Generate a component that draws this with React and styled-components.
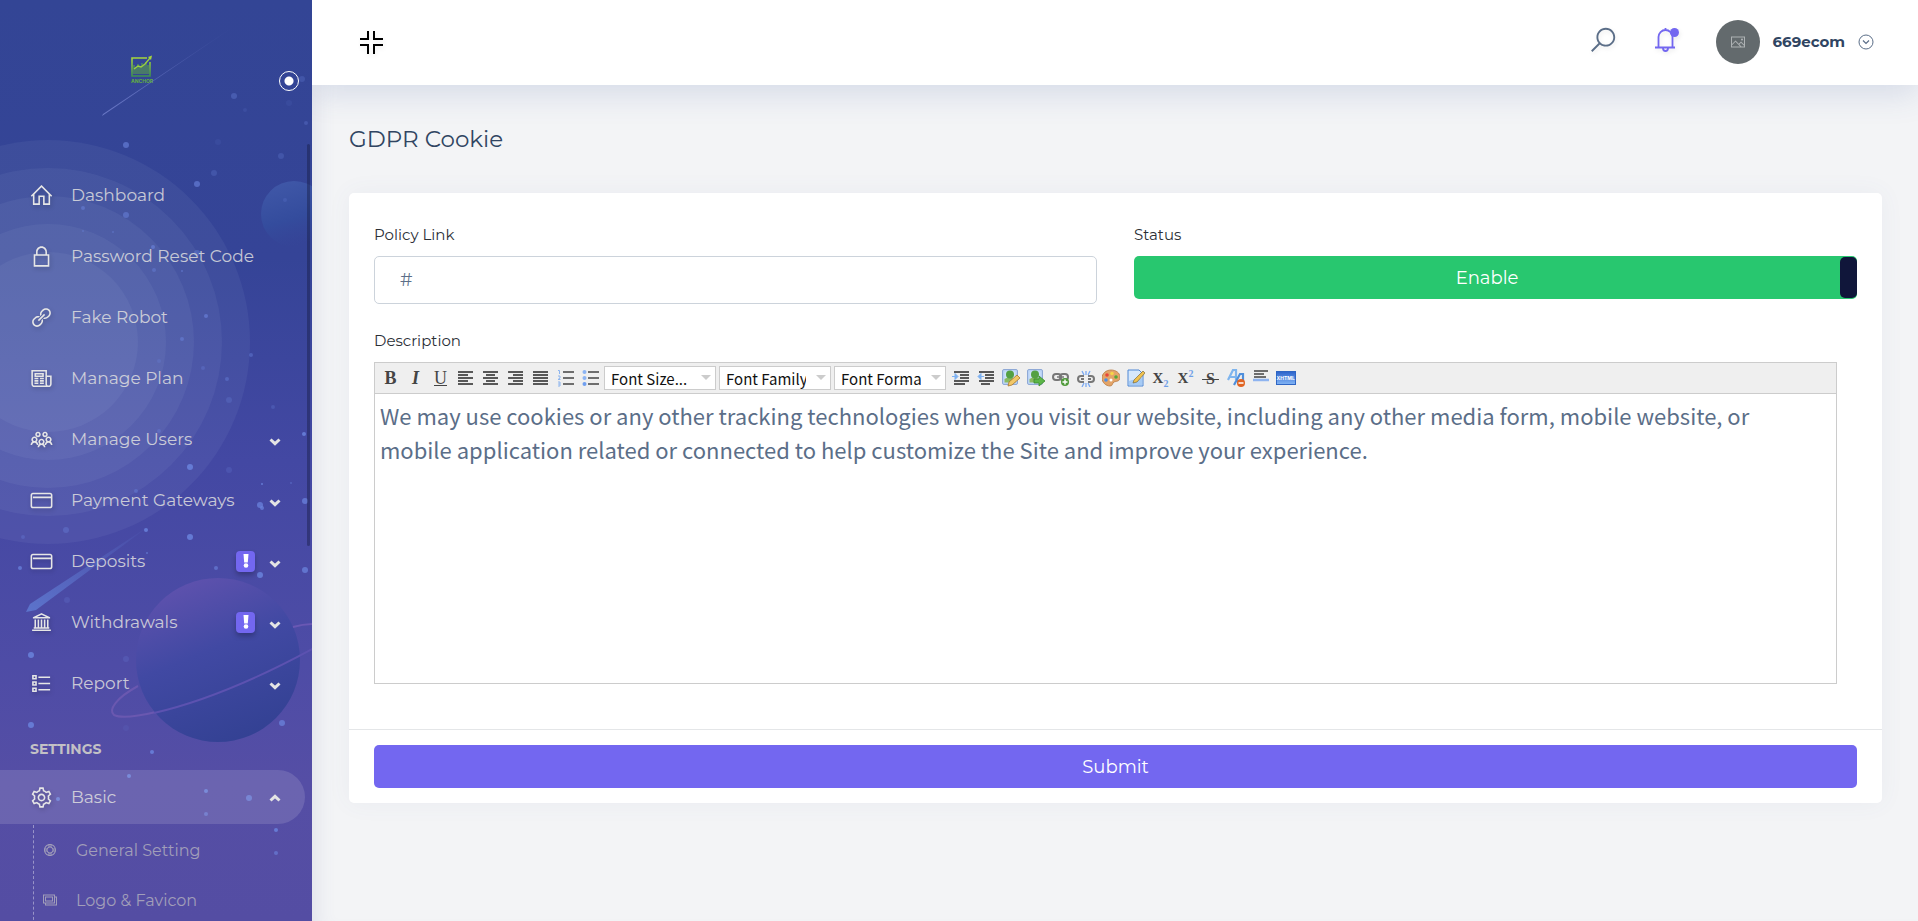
import { useState } from "react";
import styled, { createGlobalStyle } from "styled-components";
import {
  LiaCogSolid,
  LiaCreditCard,
  LiaHomeSolid,
  LiaImage,
  LiaImagesSolid,
  LiaLifeRingSolid,
  LiaLinkSolid,
  LiaListSolid,
  LiaLockSolid,
  LiaNewspaperSolid,
  LiaSearchSolid,
  LiaUniversitySolid,
  LiaUsersSolid,
} from "react-icons/lia";

const MENU = [
  { label: "Dashboard", icon: LiaHomeSolid },
  { label: "Password Reset Code", icon: LiaLockSolid },
  { label: "Fake Robot", icon: LiaLinkSolid },
  { label: "Manage Plan", icon: LiaNewspaperSolid },
  { label: "Manage Users", icon: LiaUsersSolid, nested: true },
  { label: "Payment Gateways", icon: LiaCreditCard, nested: true },
  { label: "Deposits", icon: LiaCreditCard, nested: true, alert: true },
  { label: "Withdrawals", icon: LiaUniversitySolid, nested: true, alert: true },
  { label: "Report", icon: LiaListSolid, nested: true },
];

const SUB_MENU = [
  { label: "General Setting", icon: LiaLifeRingSolid },
  { label: "Logo & Favicon", icon: LiaImagesSolid },
];

const DESCRIPTION =
  "We may use cookies or any other tracking technologies when you visit our website, including any other media form, mobile website, or mobile application related or connected to help customize the Site and improve your experience.";

// [x, y, radius, opacity]
const STARS = [
  [126, 145, 3, 0.6], [197, 184, 3, 0.6], [126, 215, 3, 0.5], [83, 208, 2, 0.5],
  [153, 247, 2, 0.6], [154, 270, 2, 0.4], [197, 253, 3, 0.4], [83, 231, 1, 0.4],
  [234, 96, 3, 0.35], [302, 79, 3, 0.25], [306, 123, 2, 0.3], [281, 156, 3, 0.25],
  [214, 173, 3, 0.25], [218, 142, 3, 0.1], [245, 110, 2, 0.15], [289, 103, 3, 0.1],
  [285, 200, 2, 0.2], [113, 232, 1, 0.4], [182, 271, 1, 0.5], [206, 316, 2, 0.6],
  [182, 339, 2, 0.5], [251, 355, 2, 0.4], [203, 368, 2, 0.3], [227, 379, 2, 0.4],
  [229, 400, 3, 0.25], [159, 361, 2, 0.25], [159, 431, 2, 0.35], [273, 407, 2, 0.25],
  [304, 434, 2, 0.8], [190, 467, 3, 0.8], [229, 470, 3, 0.2], [262, 484, 1, 0.8],
  [291, 483, 1, 0.4], [305, 501, 3, 0.7], [260, 505, 3, 0.7], [262, 508, 2, 0.7],
  [136, 491, 2, 0.4], [66, 530, 3, 0.35], [23, 537, 2, 0.3], [146, 530, 2, 0.8],
  [190, 537, 3, 0.8], [147, 553, 1, 0.6], [20, 568, 2, 0.7], [216, 568, 2, 0.6],
  [260, 575, 3, 0.8], [305, 570, 3, 0.7], [67, 600, 3, 0.2], [31, 655, 3, 0.8],
  [126, 659, 3, 0.2], [31, 725, 3, 0.8], [126, 728, 3, 0.1], [282, 723, 3, 0.7],
  [152, 752, 2, 0.8], [129, 776, 2, 0.8], [206, 791, 2, 0.8], [249, 798, 3, 0.7],
  [58, 799, 2, 0.8], [206, 814, 2, 0.6], [276, 830, 2, 0.8], [276, 853, 2, 0.6],
];

const SpaceBackdrop = () => (
  <Backdrop viewBox="0 0 312 921" preserveAspectRatio="xMidYMin slice" aria-hidden="true">
    <defs>
      <linearGradient id="sky" x1="0" y1="0" x2="0" y2="1">
        <stop offset="0" stopColor="#334595" />
        <stop offset="0.28" stopColor="#354497" />
        <stop offset="0.5" stopColor="#4348a3" />
        <stop offset="0.72" stopColor="#4e4ca6" />
        <stop offset="0.85" stopColor="#554ea5" />
        <stop offset="1" stopColor="#544da3" />
      </linearGradient>
      <linearGradient id="planet" x1="0.25" y1="0" x2="0.65" y2="1">
        <stop offset="0" stopColor="#6052ae" />
        <stop offset="0.45" stopColor="#4149a3" />
        <stop offset="1" stopColor="#334193" />
      </linearGradient>
      <linearGradient id="moon" x1="0.2" y1="0" x2="0.5" y2="1">
        <stop offset="0" stopColor="#4058a8" />
        <stop offset="0.6" stopColor="#344c9d" />
        <stop offset="1" stopColor="#36479a" stopOpacity="0" />
      </linearGradient>
      <linearGradient id="streak" x1="0" y1="1" x2="1" y2="0">
        <stop offset="0" stopColor="#6a78c6" />
        <stop offset="1" stopColor="#6a78c6" stopOpacity="0" />
      </linearGradient>
      <linearGradient id="comet" x1="0" y1="1" x2="1" y2="0">
        <stop offset="0" stopColor="#5c74cc" />
        <stop offset="1" stopColor="#5c74cc" stopOpacity="0" />
      </linearGradient>
    </defs>
    <rect width="312" height="921" fill="url(#sky)" />
    {[202, 174, 146, 118, 90].map((r) => (
      <circle key={r} cx="48" cy="342" r={r} fill="#d8e6ff" fillOpacity="0.055" />
    ))}
    <circle cx="294" cy="214" r="33" fill="url(#moon)" />
    <path d="M102 116 L103 114 L242 21 Z" fill="url(#streak)" />
    <path d="M26 612 L30 604 L152 524 L36 610 Z" fill="url(#comet)" />
    <path d="M138 686 C116 698 108 710 114 715 C120 718 135 717 156 712" fill="none" stroke="#6a58b0" strokeWidth="2" />
    <circle cx="218" cy="660" r="82" fill="url(#planet)" />
    <path d="M154 713 C210 700 270 672 314 648" fill="none" stroke="#5c52b0" strokeWidth="2" />
    <path d="M293 627 C300 625 308 624 314 624" fill="none" stroke="#6a58b4" strokeWidth="2" />
    {STARS.map(([x, y, r, o]) => (
      <circle key={`${x}-${y}`} cx={x} cy={y} r={r} fill="#6c86e0" fillOpacity={o} />
    ))}
  </Backdrop>
);

const Chevron = ({ up }) => (
  <svg width="12" height="8" viewBox="0 0 12 8" aria-hidden="true">
    <path d={up ? "M1.5 6.5 L6 2.4 L10.5 6.5" : "M1.5 1.5 L6 5.6 L10.5 1.5"} fill="none" stroke="#e4e4e4" strokeWidth="3" />
  </svg>
);

const BrandLogo = () => (
  <svg width="24" height="30" viewBox="0 0 24 30">
    <defs>
      <linearGradient id="leaf" x1="0" y1="0" x2="0" y2="1">
        <stop offset="0" stopColor="#a6d63c" />
        <stop offset="1" stopColor="#3f9150" />
      </linearGradient>
    </defs>
    <path d="M17 3 H2 V21 H20 V7" fill="none" stroke="url(#leaf)" strokeWidth="1.6" />
    <path
      d="M4 10v9M6 12v7M8 9v10M10 12v7M12 8v11M14 10v9M16 7v12M18 10v9"
      stroke="#5fae3e"
      strokeWidth="1"
    />
    <path d="M4 14 L8 11 L11 12 L15 9 L20 3" fill="none" stroke="#9bd03f" strokeWidth="1.4" />
    <path d="M18 2 L22 0.5 L21 5 Z" fill="#a6d63c" />
    <LogoWord x="12" y="28" textAnchor="middle">ANCHOR</LogoWord>
  </svg>
);

const CompressIcon = () => (
  <svg width="24" height="24" viewBox="0 0 24 24" aria-hidden="true">
    <path d="M9 1V9H1M15 1V9H24M1 15H9V24M24 15H15V24" fill="none" stroke="#000" strokeWidth="2" />
  </svg>
);

const BellIcon = () => (
  <svg width="26" height="26" viewBox="0 0 26 26" aria-hidden="true">
    <path
      d="M4.5 20.5V10a7 7 0 0 1 14 0v10.5M1 20.5H21M11.5 1v2"
      fill="none"
      stroke="#7367f0"
      strokeWidth="1.8"
    />
    <path d="M9 21a2.5 3 0 0 0 5 0" fill="none" stroke="#7367f0" strokeWidth="1.8" />
    <circle cx="20.5" cy="5.5" r="4.5" fill="#7367f0" />
  </svg>
);

const CircleDownIcon = () => (
  <svg width="16" height="16" viewBox="0 0 16 16" aria-hidden="true">
    <circle cx="8" cy="8" r="7" fill="none" stroke="#5b6e88" />
    <path d="M5 6.5 L8 9.5 L11 6.5" fill="none" stroke="#5b6e88" strokeWidth="1.2" />
  </svg>
);

// Toolbar pictograms, all on an 18 x 18 grid
const bars = (rows, stroke = "#333") =>
  rows.map(([x1, x2], i) => (
    <path key={i} d={`M${x1} ${3 + i * 3}H${x2}`} stroke={stroke} strokeWidth="1.6" />
  ));

const picture = (
  <>
    <rect x="0.5" y="0.5" width="15" height="15" rx="1.5" fill="#b9d2f5" stroke="#8fa9d6" />
    <rect x="2.5" y="2.5" width="11" height="11" fill="#cfe2fb" />
    <path d="M2.5 13.5V10l4-2 7 2v3.5z" fill="#8aba62" />
    <circle cx="8" cy="5.5" r="4" fill="#54a043" />
  </>
);

const ICONS = {
  left: bars([[1, 16], [1, 11], [1, 16], [1, 11], [1, 16]]),
  center: bars([[1, 16], [4, 13], [1, 16], [4, 13], [1, 16]]),
  right: bars([[1, 16], [6, 16], [1, 16], [6, 16], [1, 16]]),
  justify: bars([[1, 16], [1, 16], [1, 16], [1, 16], [1, 16]]),
  ordered: (
    <>
      <path d="M6 3H17M6 9H17M6 15H17" stroke="#444" strokeWidth="1.5" />
      <path d="M1 1.5h1.5V5M1 7h2v2l-2 1.5h2.5M1 13h2v4H1M1 15h2" fill="none" stroke="#8cb4ee" />
    </>
  ),
  bullets: (
    <>
      <path d="M6 3H17M6 9H17M6 15H17" stroke="#444" strokeWidth="1.5" />
      <circle cx="2.5" cy="3" r="2" fill="#8cb4f4" />
      <circle cx="2.5" cy="9" r="2" fill="#8cb4f4" />
      <circle cx="2.5" cy="15" r="2" fill="#6f9ff0" />
    </>
  ),
  indent: (
    <>
      {bars([[2, 17], [8, 17], [8, 17], [2, 17], [2, 13]])}
      <path d="M0 7.5H4M3 4.5l3 3-3 3z" fill="#7db1f2" stroke="#7db1f2" />
    </>
  ),
  outdent: (
    <>
      {bars([[2, 17], [8, 17], [8, 17], [2, 17], [4, 13]])}
      <path d="M7 7.5H3M4 4.5l-3 3 3 3z" fill="#7db1f2" stroke="#7db1f2" />
    </>
  ),
  editImage: (
    <>
      {picture}
      <path d="M6 17l1-4 8-7 3 3-8 7z" fill="#f2c869" stroke="#a9762b" strokeWidth="0.8" />
    </>
  ),
  addImage: (
    <>
      {picture}
      <path d="M7 10h5V7l6 5-6 5v-3H7z" fill="#5cb648" stroke="#3a8a2b" strokeWidth="0.8" />
    </>
  ),
  link: (
    <>
      <rect x="1" y="5" width="8" height="6" rx="3" fill="none" stroke="#777" strokeWidth="2" />
      <rect x="8" y="5" width="8" height="6" rx="3" fill="none" stroke="#777" strokeWidth="2" />
      <path d="M5 8h7" stroke="#777" strokeWidth="1.5" />
      <circle cx="13" cy="13" r="4" fill="#4f9a3a" />
      <path d="M13 10.5v5M10.5 13h5" stroke="#fff" strokeWidth="1.4" />
    </>
  ),
  unlink: (
    <>
      <path d="M7 7H4a3 3 0 0 0 0 6h3M11 7h3a3 3 0 0 1 0 6h-3M4 10h3M11 10h3" fill="none" stroke="#777" strokeWidth="2" />
      <path d="M9 2v4M5 2l2 4M13 2l-2 4M9 18v-4M5 18l2-4M13 18l-2-4" stroke="#7aa9f2" strokeWidth="1.3" />
    </>
  ),
  palette: (
    <>
      <path
        d="M9 1C4 1 0 4.5 0 9s4 8 8 8c3 0 2-3 4-4s6 0 6-5c0-4-4-7-9-7z"
        fill="#e3a468"
        stroke="#b97840"
        strokeWidth="0.8"
      />
      <circle cx="5" cy="6" r="1.8" fill="#e8463a" />
      <circle cx="10" cy="4.5" r="1.8" fill="#f5d547" />
      <circle cx="14" cy="8" r="1.8" fill="#52a838" />
      <circle cx="4" cy="11" r="1.8" fill="#4b8fe8" />
      <circle cx="9" cy="11" r="1.5" fill="#fff" />
    </>
  ),
  page: (
    <>
      <path d="M1 1h11l4 4v12H1z" fill="#d6e8fc" stroke="#4f87d4" />
      <path d="M2 12c4-2 8-1 13-3v7H2z" fill="#a6cbf5" />
      <path d="M6 14l1-3 9-9 2 2-8 9z" fill="#f0c14e" stroke="#6b5a2c" strokeWidth="0.6" />
    </>
  ),
  removeFormat: (
    <>
      <path d="M1 11L6 1h3v10M3 8h6" fill="none" stroke="#7fb5ee" strokeWidth="2.2" />
      <path d="M7 16l6-11h3v8M9 12h6" fill="none" stroke="#4f8fdc" strokeWidth="2.2" />
      <circle cx="14" cy="14" r="4" fill="#e06422" />
      <path d="M11.5 14h5" stroke="#fff" strokeWidth="1.5" />
    </>
  ),
  rule: (
    <>
      <path d="M2 2H16M2 5H12M2 8H14" stroke="#444" strokeWidth="1.5" />
      <path d="M1 11H17" stroke="#8fb4f0" strokeWidth="2.5" />
    </>
  ),
};

const SIZE_TOOLS = ["left", "center", "right", "justify", "ordered", "bullets"];
const INSERT_TOOLS = ["indent", "outdent", "editImage", "addImage", "link", "unlink", "palette", "page"];
const FONT_SELECTS = ["Font Size...", "Font Family", "Font Format"];

const IconTool = ({ name }) => (
  <Tool type="button" aria-label={name}>
    <svg width="18" height="18" viewBox="0 0 18 18" aria-hidden="true">
      {ICONS[name]}
    </svg>
  </Tool>
);

const EditorToolbar = () => (
  <Toolbar>
    <Tool type="button"><b>B</b></Tool>
    <Tool type="button"><b><i>I</i></b></Tool>
    <Tool type="button"><u>U</u></Tool>
    {SIZE_TOOLS.map((name) => (
      <IconTool key={name} name={name} />
    ))}
    {FONT_SELECTS.map((name) => (
      <FontPicker key={name}>
        <select aria-label={name}>
          <option>{name}</option>
        </select>
      </FontPicker>
    ))}
    {INSERT_TOOLS.map((name) => (
      <IconTool key={name} name={name} />
    ))}
    <Tool type="button" $small><b>X<sub>2</sub></b></Tool>
    <Tool type="button" $small><b>X<sup>2</sup></b></Tool>
    <Tool type="button"><b><s>&nbsp;S&nbsp;</s></b></Tool>
    <IconTool name="removeFormat" />
    <IconTool name="rule" />
    <Tool type="button"><XhtmlMark>XHTML</XhtmlMark></Tool>
  </Toolbar>
);

const MenuItem = ({ label, icon: Icon, nested, alert, open }) => (
  <li>
    <MenuLink href="#" $active={open}>
      <Icon size={25} />
      <MenuLabel>{label}</MenuLabel>
      {alert && (
        <AlertBadge>
          <svg width="6" height="14" viewBox="0 0 6 14" aria-hidden="true">
            <path d="M0.5 0h5l-0.7 8.5h-3.6z" fill="#fff" />
            <circle cx="3" cy="11.5" r="2.3" fill="#fff" />
          </svg>
        </AlertBadge>
      )}
      {nested && (
        <Arrow $up={open}>
          <Chevron up={open} />
        </Arrow>
      )}
    </MenuLink>
  </li>
);

const App = () => {
  const [policyLink, setPolicyLink] = useState("#");
  const [description, setDescription] = useState(DESCRIPTION);
  const [enabled, setEnabled] = useState(true);

  return (
    <>
      <GlobalStyle />
      <Layout>
        <Sidebar>
          <SpaceBackdrop />
          <SidebarHead>
            <Brand href="#" aria-label="Anchor">
              <BrandLogo />
            </Brand>
            <CollapseButton type="button" aria-label="Collapse menu" />
          </SidebarHead>
          <nav>
            <Menu>
              {MENU.map((item) => (
                <MenuItem key={item.label} {...item} />
              ))}
            </Menu>
            <MenuHeading>SETTINGS</MenuHeading>
            <Menu>
              <MenuItem label="Basic" icon={LiaCogSolid} nested open />
            </Menu>
            <SubMenu>
              {SUB_MENU.map(({ label, icon: Icon }) => (
                <li key={label}>
                  <SubLink href="#">
                    <Icon size={16} />
                    {label}
                  </SubLink>
                </li>
              ))}
            </SubMenu>
          </nav>
          <ScrollThumb />
        </Sidebar>

        <Main>
          <Header>
            <IconButton type="button" aria-label="Exit full screen">
              <CompressIcon />
            </IconButton>
            <HeaderActions>
              <IconButton type="button" aria-label="Search">
                <LiaSearchSolid size={30} color="#5b6e88" />
              </IconButton>
              <IconButton type="button" aria-label="Notifications">
                <BellIcon />
              </IconButton>
              <UserButton type="button">
                <Avatar>
                  <LiaImage size={16} />
                </Avatar>
                669ecom
                <CircleDownIcon />
              </UserButton>
            </HeaderActions>
          </Header>

          <Content>
            <PageTitle>GDPR Cookie</PageTitle>
            <Card onSubmit={(e) => e.preventDefault()}>
              <CardBody>
                <FieldRow>
                  <div>
                    <Label htmlFor="policy-link">Policy Link</Label>
                    <TextInput
                      id="policy-link"
                      value={policyLink}
                      onChange={(e) => setPolicyLink(e.target.value)}
                    />
                  </div>
                  <div>
                    <Label htmlFor="status">Status</Label>
                    <Switch $on={enabled}>
                      <input
                        id="status"
                        type="checkbox"
                        checked={enabled}
                        onChange={(e) => setEnabled(e.target.checked)}
                      />
                      <span>{enabled ? "Enable" : "Disabled"}</span>
                      <SwitchHandle />
                    </Switch>
                  </div>
                </FieldRow>
                <Label htmlFor="description">Description</Label>
                <Editor>
                  <EditorToolbar />
                  <EditorText
                    id="description"
                    spellCheck={false}
                    value={description}
                    onChange={(e) => setDescription(e.target.value)}
                  />
                </Editor>
              </CardBody>
              <CardFooter>
                <SubmitButton type="submit">Submit</SubmitButton>
              </CardFooter>
            </Card>
          </Content>
        </Main>
      </Layout>
    </>
  );
};

export default App;

const GlobalStyle = createGlobalStyle`
  * {
    box-sizing: border-box;
  }

  body {
    margin: 0;
    background: #f3f4f6;
    color: #5b6e88;
    font-family: Montserrat, Inter, sans-serif;
    font-size: 16px;
  }

  button, input, select, textarea {
    font: inherit;
  }

  ul {
    list-style: none;
    margin: 0;
    padding: 0;
  }
`;

const Layout = styled.div`
  display: flex;
  min-height: 100vh;
`;

const Sidebar = styled.aside`
  position: sticky;
  top: 0;
  z-index: 1;
  flex: 0 0 312px;
  height: 100vh;
  overflow: hidden;
  isolation: isolate;
  background: #554ea5;
`;

const Backdrop = styled.svg`
  position: absolute;
  inset: 0;
  z-index: -1;
  width: 100%;
  height: 100%;
`;

const SidebarHead = styled.div`
  display: flex;
  align-items: flex-start;
  height: 168px;
  padding: 55px 13px 0 4px;
`;

const Brand = styled.a`
  flex: 1;
  display: flex;
  justify-content: center;
`;

const LogoWord = styled.text`
  font-family: Inter, sans-serif;
  font-size: 5px;
  font-weight: 700;
  fill: #62b03f;
`;

const CollapseButton = styled.button`
  width: 20px;
  height: 20px;
  margin-top: 16px;
  padding: 0;
  border: 1px solid #fff;
  border-radius: 50%;
  background: radial-gradient(circle, #fff 4px, transparent 5px);
  cursor: pointer;
`;

const Menu = styled.ul`
  display: flex;
  flex-direction: column;
  gap: 7px;
`;

const MenuLink = styled.a`
  display: flex;
  align-items: center;
  height: 54px;
  margin-right: 7px;
  padding: 0 24px 0 29px;
  border-radius: 0 27px 27px 0;
  background: ${({ $active }) => ($active ? "rgba(255, 255, 255, 0.13)" : "transparent")};
  color: #e6e6e6;
  font-size: 17px;
  text-decoration: none;

  > svg {
    flex: none;
    filter: drop-shadow(1px 2px 2px rgba(0, 0, 0, 0.2));
  }
`;

const MenuLabel = styled.span`
  flex: 1;
  margin-left: 17px;
  color: rgba(224, 224, 224, 0.85);
`;

const AlertBadge = styled.span`
  display: flex;
  justify-content: center;
  width: 19px;
  height: 21px;
  padding-top: 3px;
  border-radius: 4px;
  background: #7367f0;
  box-shadow: 0 3px 5px rgba(0, 0, 0, 0.25);
`;

const Arrow = styled.span`
  display: flex;
  margin-left: 14px;
  padding-top: ${({ $up }) => ($up ? "2px" : "6px")};
`;

const MenuHeading = styled.h6`
  margin: 30px 0 12px 30px;
  color: #c3c1c5;
  font-size: 14px;
  font-weight: 700;
  line-height: 18px;
`;

const SubMenu = styled.ul`
  margin: 1px 0 0 33px;
  border-left: 1px dashed rgba(255, 255, 255, 0.4);
`;

const SubLink = styled.a`
  display: flex;
  align-items: center;
  gap: 18px;
  height: 50px;
  padding-left: 8px;
  color: #a19eb9;
  text-decoration: none;
`;

const ScrollThumb = styled.span`
  position: absolute;
  top: 144px;
  right: 2px;
  width: 3px;
  height: 402px;
  border-radius: 2px;
  background: rgba(20, 25, 60, 0.4);
`;

const Main = styled.main`
  flex: 1;
  min-width: 0;
  box-shadow: inset 20px 0 20px -16px rgba(90, 100, 150, 0.12);
`;

const Header = styled.header`
  display: flex;
  align-items: center;
  justify-content: space-between;
  height: 85px;
  padding: 0 44px 2px 47px;
  background: #fff;
  box-shadow: 0 8px 32px rgba(62, 87, 160, 0.17);
`;

const HeaderActions = styled.div`
  display: flex;
  align-items: center;
  gap: 36px;
`;

const IconButton = styled.button`
  display: flex;
  padding: 0;
  border: 0;
  background: none;
  cursor: pointer;

  svg {
    filter: drop-shadow(1px 2px 2px rgba(0, 0, 0, 0.08));
  }

  ${HeaderActions} & {
    padding-bottom: 4px;
  }
`;

const UserButton = styled.button`
  display: flex;
  align-items: center;
  gap: 13px;
  padding: 0;
  border: 0;
  background: none;
  color: #304562;
  font-size: 15px;
  font-weight: 700;
  cursor: pointer;
`;

const Avatar = styled.span`
  display: flex;
  align-items: center;
  justify-content: center;
  width: 44px;
  height: 44px;
  border-radius: 50%;
  background: #636a6d;
  color: #aeb2b4;
`;

const Content = styled.div`
  padding: 39px 36px 39px 37px;
`;

const PageTitle = styled.h1`
  margin: 0 0 39px;
  color: #304562;
  font-size: 23px;
  font-weight: 400;
  line-height: 30px;
`;

const Card = styled.form`
  border-radius: 5px;
  background: #fff;
  box-shadow: 0 0 24px rgba(90, 100, 150, 0.06);
`;

const CardBody = styled.div`
  padding: 32px 25px 45px;
`;

const FieldRow = styled.div`
  display: grid;
  grid-template-columns: 1fr 1fr;
  gap: 37px;
  margin-bottom: 27px;
`;

const Label = styled.label`
  display: block;
  margin-bottom: 11px;
  color: #2b2f36;
  font-size: 15px;
  line-height: 20px;
`;

const TextInput = styled.input`
  display: block;
  width: 100%;
  height: 48px;
  padding: 0 25px;
  border: 1px solid #ccd3db;
  border-radius: 5px;
  background: #fff;
  color: #5b6e88;
  font-size: 18px;
`;

const Switch = styled.label`
  display: flex;
  align-items: center;
  height: 43px;
  padding: 1px 0;
  border-radius: 5px;
  background: ${({ $on }) => ($on ? "#28c76f" : "#ea5455")};
  color: #fff;
  font-size: 18px;
  cursor: pointer;

  input {
    position: absolute;
    opacity: 0;
  }

  span:first-of-type {
    flex: 1;
    text-align: center;
  }
`;

const SwitchHandle = styled.span`
  width: 17px;
  height: 100%;
  border-radius: 5px;
  background: #10163a;
`;

const Editor = styled.div`
  margin-right: 20px;
  border: 1px solid #ccc;
`;

const Toolbar = styled.div`
  display: flex;
  align-items: center;
  height: 31px;
  padding-left: 3px;
  border-bottom: 1px solid #ccc;
  background: #efefef;
`;

const Tool = styled.button`
  display: flex;
  align-items: center;
  justify-content: center;
  width: 25px;
  height: 24px;
  padding: 0;
  border: 0;
  background: none;
  color: #444;
  font-family: "Liberation Serif", serif;
  font-size: ${({ $small }) => ($small ? "15px" : "18px")};
  line-height: 20px;

  sub,
  sup {
    color: #6f9fe8;
    font-size: 10px;
    line-height: 0;
  }

  s {
    font-size: 16px;
  }
`;

const XhtmlMark = styled.span`
  width: 20px;
  border: 1px solid #2f66c4;
  background: linear-gradient(#2f66cc, #7fb2f4);
  color: #fff;
  font-family: Inter, sans-serif;
  font-size: 5px;
  font-weight: 700;
  line-height: 12px;
`;

const FontPicker = styled.span`
  position: relative;
  margin: 0 2px 0 1px;

  select {
    display: block;
    width: 112px;
    height: 24px;
    padding: 0 24px 0 6px;
    border: 1px solid #ccc;
    border-radius: 0;
    appearance: none;
    background: #fff;
    color: #111;
    font-family: "Noto Sans CJK SC", sans-serif;
    font-size: 15px;
  }

  /* drop-down arrow over the select */
  &::after {
    content: "";
    position: absolute;
    top: 9px;
    right: 5px;
    border: 5px solid transparent;
    border-top-color: #ccc;
    pointer-events: none;
  }
`;

const EditorText = styled.textarea`
  display: block;
  width: 100%;
  height: 289px;
  padding: 4px 20px 4px 5px;
  border: 0;
  outline: 0;
  resize: none;
  background: #fff;
  color: #5b6e88;
  font-family: "Noto Sans CJK SC", sans-serif;
  font-size: 22px;
  line-height: 34px;
`;

const CardFooter = styled.div`
  padding: 15px 25px;
  border-top: 1px solid #e4e6e8;
`;

const SubmitButton = styled.button`
  display: block;
  width: 100%;
  height: 43px;
  border: 0;
  border-radius: 5px;
  background: #7367f0;
  color: #fff;
  font-size: 18px;
  cursor: pointer;
`;
